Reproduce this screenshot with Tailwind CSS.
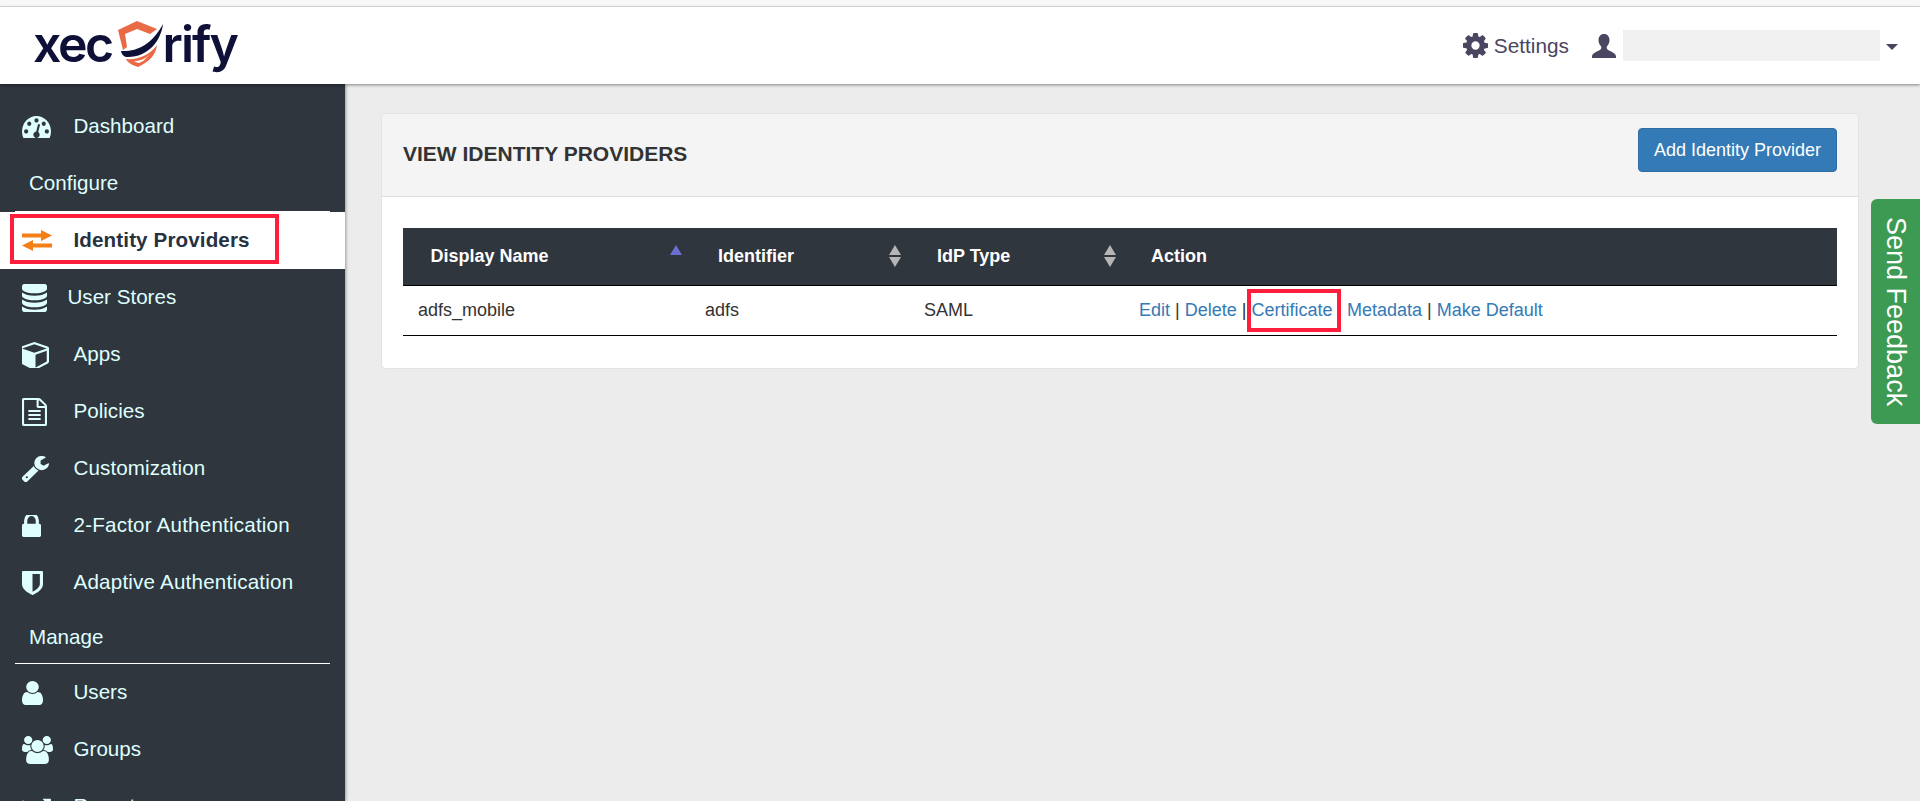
<!DOCTYPE html>
<html lang="en">
<head>
    <meta charset="UTF-8">
    <meta name="viewport" content="width=device-width, initial-scale=1.0">
    <title>View Identity Providers</title>
    <script src="https://cdn.jsdelivr.net/npm/@tailwindcss/browser@4"></script>
</head>
<body class="relative h-[801px] overflow-hidden bg-[#ececec] font-['Liberation_Sans',Arial,sans-serif] text-[18px] text-[#333]">
    <!-- browser strip -->
    <div class="h-[7px] bg-[#f8f8f8] border-b border-[#e0e0e0]"></div>

    <header class="relative z-20 h-[77px] bg-white shadow-[0_1px_3px_rgba(0,0,0,0.45)] flex items-center justify-between">
        <div class="flex items-center pl-[33px] text-[#0e1038] font-['Inter',sans-serif] font-semibold text-[50px] leading-none tracking-[-2.500px] -mt-[4px]">
            <span>xec</span>
            <svg class="w-[48px] h-[50px] ml-[6px] -mr-[3px]" viewBox="0 0 48 50">
                <path fill="#e96a45" d="M0 11 19 2 39 10 32 15 19 10 7 15 9 28 5 31Z"/>
                <path fill="#e96a45" d="M8 40C20 41 32 36 39 26 38 36 31 43 20 48 14 46 10 44 8 40Z"/>
                <path fill="#fff" d="M16 42C22 42 27 40 31 36 27 41 23 44 20 44Z"/>
                <path fill="#0e1038" d="M3 32C18 33 34 26 45 5 43 22 30 38 10 38 6 38 4 36 3 32Z"/>
            </svg>
            <span class="tracking-[-2px]">rify</span>
        </div>
        <div class="flex items-center text-[#4a4560] text-[20.8px] pr-[22px]">
            <svg class="w-[25px] h-[25px] mr-[6px]" viewBox="128 128 1536 1536" fill="#4a4560"><path d="M1152 896q0-106-75-181t-181-75-181 75-75 181 75 181 181 75 181-75 75-181zm512-109v222q0 12-8 23t-20 13l-185 28q-19 54-39 91 35 50 107 138 10 12 10 25t-9 23q-27 37-99 108t-94 71q-12 0-26-9l-138-108q-44 23-91 38-16 136-29 186-7 28-36 28h-222q-14 0-24.5-8.5t-11.5-21.5l-28-184q-49-16-90-37l-141 107q-10 9-25 9-14 0-25-11-126-114-165-168-7-10-7-23 0-12 8-23 15-21 51-66.5t54-70.5q-27-50-41-99l-183-27q-13-2-21-12.5t-8-23.5v-222q0-12 8-23t19-13l186-28q14-46 39-92-40-57-107-138-10-12-10-24 0-10 9-23 26-36 98.5-107.5t94.5-71.5q13 0 26 10l138 107q44-23 91-38 16-136 29-186 7-28 36-28h222q14 0 24.5 8.5t11.5 21.5l28 184q49 16 90 37l142-107q9-9 24-9 13 0 25 10 129 119 165 170 7 8 7 22 0 12-8 23-15 21-51 66.5t-54 70.5q26 50 41 98l183 28q13 2 21 12.5t8 23.5z"/></svg>
            <span>Settings</span>
            <svg class="w-[24px] h-[24px] ml-[23px]" viewBox="0 0 24 24" fill="#4a4560"><path d="M12 0c-3.6 0-5.5 2.7-5.5 6 0 2.6 1.2 5 2.7 6.6.3 1.4-.2 2.6-1 3.2C5.500 17.500 0 19 0 22.500V24h24v-1.500c0-3.500-5.500-5-8.200-6.700-.8-.6-1.300-1.800-1-3.200 1.500-1.600 2.700-4 2.700-6.600 0-3.300-1.900-6-5.500-6z"/></svg>
            <div class="w-[257px] h-[31px] ml-[7px] bg-[#f0f0f1]"></div>
            <div class="ml-[6px] mt-[3px] border-x-[6px] border-x-transparent border-t-[6px] border-t-[#4a4560]"></div>
        </div>
    </header>

    <div class="flex h-[717px]">
        <aside class="relative z-10 w-[345px] shrink-0 h-full overflow-hidden bg-[#30363e] text-[#dfffff] text-[20.6px] pt-[14px] shadow-[1px_0_3px_rgba(0,0,0,0.35)]">
            <a class="flex items-center h-[57px] pl-[22px]">
                <span class="w-[51.500px]"><svg class="w-[29px] h-[22px]" viewBox="0 256 1792 1280" preserveAspectRatio="none" fill="#dfffff"><path d="M384 1152q0-53-37.500-90.500t-90.500-37.500-90.500 37.500-37.500 90.500 37.500 90.500 90.500 37.500 90.500-37.500 37.500-90.500zm192-448q0-53-37.500-90.500t-90.500-37.500-90.500 37.500-37.500 90.500 37.500 90.500 90.500 37.500 90.500-37.500 37.500-90.500zm428 481l101-382q6-26-7.500-48.500t-38.500-29.500-48 6.500-30 39.500l-101 382q-60 5-107 43.500t-63 98.500q-20 77 20 146t117 89 146-20 89-117q16-60-6-117t-72-91zm660-33q0-53-37.500-90.500t-90.500-37.500-90.500 37.500-37.500 90.500 37.500 90.500 90.500 37.500 90.500-37.500 37.500-90.500zm-640-640q0-53-37.500-90.500t-90.500-37.500-90.500 37.500-37.500 90.500 37.500 90.500 90.500 37.500 90.500-37.500 37.500-90.500zm448 192q0-53-37.500-90.500t-90.500-37.500-90.500 37.500-37.500 90.500 37.500 90.500 90.500 37.500 90.500-37.500 37.500-90.500zm320 448q0 261-141 483-19 29-54 29h-1402q-35 0-54-29-141-221-141-483 0-182 71-348t191-286 286-191 348-71 348 71 286 191 191 286 71 348z"/></svg></span>
                <span>Dashboard</span>
            </a>
            <div class="mx-[15px] h-[57px] pl-[14px] flex items-center border-b border-white">Configure</div>
            <a class="flex items-center h-[57px] pl-[22px] bg-white text-[#26323f] font-bold">
                <span class="w-[51.500px]"><svg class="w-[30px] h-[21px]" viewBox="0 0 30 21" fill="#f47f17"><path d="M0 3.500H19V0L30 5.500 19 11V7.500H0Z"/><path d="M30 13.500H11V10L0 15.500 11 21V17.500H30Z"/></svg></span>
                <span class="tracking-[0.12px]">Identity Providers</span>
            </a>
            <a class="flex items-center h-[57px] pl-[22px]">
                <span class="w-[45.500px]"><svg class="w-[25px] h-[28px]" viewBox="128 128 1536 1536" preserveAspectRatio="none" fill="#dfffff"><path d="M896 768q237 0 443-43t325-127v170q0 69-103 128t-280 93.500-385 34.500-385-34.500-280-93.500-103-128v-170q119 84 325 127t443 43zm0 768q237 0 443-43t325-127v170q0 69-103 128t-280 93.500-385 34.500-385-34.500-280-93.500-103-128v-170q119 84 325 127t443 43zm0-384q237 0 443-43t325-127v170q0 69-103 128t-280 93.500-385 34.500-385-34.500-280-93.500-103-128v-170q119 84 325 127t443 43zm0-1152q208 0 385 34.500t280 93.500 103 128v128q0 69-103 128t-280 93.500-385 34.500-385-34.500-280-93.500-103-128v-128q0-69 103-128t280-93.500 385-34.500z"/></svg></span>
                <span>User Stores</span>
            </a>
            <a class="flex items-center h-[57px] pl-[22px]">
                <span class="w-[51.500px]"><svg class="w-[27px] h-[26px]" viewBox="128 128 1536 1536" preserveAspectRatio="none" fill="#dfffff"><path d="M896 1629l640-349v-636l-640 233v752zm-64-865l698-254-698-254-698 254zm832-252v768q0 35-18 65t-49 47l-704 384q-28 16-61 16t-61-16l-704-384q-31-17-49-47t-18-65v-768q0-40 23-73t61-47l704-256q22-8 44-8t44 8l704 256q38 14 61 47t23 73z"/></svg></span>
                <span>Apps</span>
            </a>
            <a class="flex items-center h-[57px] pl-[22px]">
                <span class="w-[51.500px]"><svg class="w-[25px] h-[28px]" viewBox="128 0 1536 1792" preserveAspectRatio="none" fill="#dfffff"><path d="M1596 380q28 28 48 76t20 88v1152q0 40-28 68t-68 28h-1344q-40 0-68-28t-28-68v-1600q0-40 28-68t68-28h896q40 0 88 20t76 48zm-444-244v376h376q-10-29-22-41l-313-313q-12-12-41-22zm384 1528v-1024h-416q-40 0-68-28t-28-68v-416h-768v1536h1280zm-1024-864q0-14 9-23t23-9h704q14 0 23 9t9 23v64q0 14-9 23t-23 9h-704q-14 0-23-9t-9-23v-64zm736 224q14 0 23 9t9 23v64q0 14-9 23t-23 9h-704q-14 0-23-9t-9-23v-64q0-14 9-23t23-9h704zm0 256q14 0 23 9t9 23v64q0 14-9 23t-23 9h-704q-14 0-23-9t-9-23v-64q0-14 9-23t23-9h704z"/></svg></span>
                <span>Policies</span>
            </a>
            <a class="flex items-center h-[57px] pl-[22px]">
                <span class="w-[51.500px]"><svg class="w-[27px] h-[26px]" viewBox="90 130 1636 1640" preserveAspectRatio="none" fill="#dfffff"><path d="M448 1472q0-26-19-45t-45-19-45 19-19 45 19 45 45 19 45-19 19-45zm644-420l-682 682q-37 37-90 37-52 0-91-37l-106-108q-38-36-38-90 0-53 38-91l681-681q39 98 114.500 173.500t173.500 114.500zm634-435q0 39-23 106-47 134-164.500 217.500t-258.500 83.500q-185 0-316.500-131.500t-131.500-316.500 131.500-316.500 316.500-131.500q58 0 121.500 16.500t107.500 46.500q16 11 16 28t-16 28l-293 169v224l193 107q5-3 79-48.500t135.500-81 70.500-35.500q15 0 23.500 10t8.500 25z"/></svg></span>
                <span class="tracking-[0.1px]">Customization</span>
            </a>
            <a class="flex items-center h-[57px] pl-[22px]">
                <span class="w-[51.500px]"><svg class="w-[19px] h-[22px]" viewBox="320 256 1152 1280" preserveAspectRatio="none" fill="#dfffff"><path d="M640 768h512v-192q0-106-75-181t-181-75-181 75-75 181v192zm832 96v576q0 40-28 68t-68 28h-960q-40 0-68-28t-28-68v-576q0-40 28-68t68-28h32v-192q0-184 132-316t316-132 316 132 132 316v192h32q40 0 68 28t28 68z"/></svg></span>
                <span class="tracking-[0.2px]">2-Factor Authentication</span>
            </a>
            <a class="flex items-center h-[57px] pl-[22px]">
                <span class="w-[51.500px]"><svg class="w-[21px] h-[24px]" viewBox="256 128 1280 1536" preserveAspectRatio="none" fill="#dfffff"><path d="M1344 960v-640h-448v1137q119-63 213-137 235-184 235-360zm192-768v768q0 86-33.500 170.500t-83 150-118 127.500-126.500 103-121 77.500-89.500 49.500-42.500 20q-12 6-26 6t-26-6q-16-7-42.500-20t-89.500-49.500-121-77.500-126.500-103-118-127.500-83-150-33.500-170.500v-768q0-26 19-45t45-19h1152q26 0 45 19t19 45z"/></svg></span>
                <span class="tracking-[0.2px]">Adaptive Authentication</span>
            </a>
            <div class="mx-[15px] h-[53px] pl-[14px] flex items-center border-b border-white">Manage</div>
            <a class="flex items-center h-[57px] pl-[22px]">
                <span class="w-[51.500px]"><svg class="w-[21px] h-[24px]" viewBox="256 128 1280 1536" preserveAspectRatio="none" fill="#dfffff"><path d="M1536 1399q0 109-62.500 187t-150.500 78h-854q-88 0-150.500-78t-62.500-187q0-85 8.500-160.500t31.500-152 58.500-131 94-89 134.500-34.500q131 128 313 128t313-128q76 0 134.500 34.500t94 89 58.500 131 31.500 152 8.500 160.500zm-256-887q0 159-112.500 271.500t-271.500 112.500-271.500-112.500-112.500-271.500 112.500-271.500 271.500-112.500 271.500 112.500 112.500 271.500z"/></svg></span>
                <span>Users</span>
            </a>
            <a class="flex items-center h-[57px] pl-[22px]">
                <span class="w-[51.500px]"><svg class="w-[31px] h-[28px]" viewBox="0 0 1920 1792" preserveAspectRatio="none" fill="#dfffff"><path d="M593 896q-162 5-265 128h-134q-82 0-138-40.500t-56-118.500q0-353 124-353 6 0 43.500 21t97.500 42.500 119 21.500q67 0 133-23-5 37-5 66 0 139 81 256zm1071 637q0 120-73 189.500t-194 69.500h-874q-121 0-194-69.500t-73-189.500q0-53 3.500-103.500t14-109 26.500-108.500 43-97.500 62-81 85.500-53.500 111.500-20q10 0 43 21.500t73 48 107 48 135 21.500 135-21.500 107-48 73-48 43-21.500q61 0 111.500 20t85.500 53.500 62 81 43 97.500 26.500 108.500 14 109 3.500 103.500zm-1024-1277q0 106-75 181t-181 75-181-75-75-181 75-181 181-75 181 75 75 181zm704 384q0 159-112.500 271.500t-271.500 112.500-271.500-112.500-112.500-271.500 112.500-271.500 271.500-112.500 271.500 112.500 112.500 271.500zm576 225q0 78-56 118.500t-138 40.500h-134q-103-123-265-128 81-117 81-256 0-29-5-66 66 23 133 23 59 0 119-21.500t97.500-42.500 43.500-21q124 0 124 353zm-128-609q0 106-75 181t-181 75-181-75-75-181 75-181 181-75 181 75 75 181z"/></svg></span>
                <span>Groups</span>
            </a>
            <a class="flex items-center h-[57px] pl-[22px]">
                <span class="w-[51.500px]"><svg class="w-[31px] h-[20px]" viewBox="0 256 1920 1408" preserveAspectRatio="none" fill="#dfffff"><path d="M1920 1536v128h-1920v-1152h128v1024h1792zm-128-1120v435q0 21-19.500 29.500t-35.500-7.500l-121-121-633 633q-10 10-23 10t-23-10l-233-233-416 416-192-192 585-585q10-10 23-10t23 10l233 233 464-464-121-121q-16-16-7.500-35.500t29.500-19.500h435q14 0 23 9t9 23z"/></svg></span>
                <span>Reports</span>
            </a>
        </aside>

        <main class="flex-1 pl-[36px] pr-[61px] pt-[29px]">
            <section class="bg-white border border-[#e3e3e3] rounded-[5px] overflow-hidden">
                <div class="h-[83px] bg-[#f4f4f4] border-b border-[#ddd] pl-[21px] pr-[21px] flex justify-between">
                    <h2 class="text-[21px] font-bold text-[#333] mt-[27px] leading-[26px]">VIEW IDENTITY PROVIDERS</h2>
                    <button class="w-[199px] h-[44px] mt-[14px] bg-[#337ab7] border border-[#2e6da4] rounded-[4px] text-white text-[18px]">Add Identity Provider</button>
                </div>
                <div class="pl-[21px] pr-[21px] pt-[31px] pb-[32px]">
                    <table class="w-full table-fixed border-collapse">
                        <colgroup>
                            <col class="w-[287px]"><col class="w-[219px]"><col class="w-[215px]"><col>
                        </colgroup>
                        <thead>
                            <tr class="h-[57px] bg-[#30363e] text-white text-left border-b border-black">
                                <th class="relative pl-[27.500px] font-bold">Display Name
                                    <span class="absolute right-[8px] top-[17px] border-x-[6.500px] border-x-transparent border-b-[10px] border-b-[#6a6fd0]"></span>
                                </th>
                                <th class="relative pl-[28px] font-bold">Identifier
                                    <span class="absolute right-[8px] top-[17px] border-x-[6.500px] border-x-transparent border-b-[10px] border-b-[#b5b5b5]"></span>
                                    <span class="absolute right-[8px] top-[29px] border-x-[6.500px] border-x-transparent border-t-[10px] border-t-[#b5b5b5]"></span>
                                </th>
                                <th class="relative pl-[28px] font-bold">IdP Type
                                    <span class="absolute right-[8px] top-[17px] border-x-[6.500px] border-x-transparent border-b-[10px] border-b-[#b5b5b5]"></span>
                                    <span class="absolute right-[8px] top-[29px] border-x-[6.500px] border-x-transparent border-t-[10px] border-t-[#b5b5b5]"></span>
                                </th>
                                <th class="pl-[27px] font-bold">Action</th>
                            </tr>
                        </thead>
                        <tbody>
                            <tr class="h-[50px] border-b border-black">
                                <td class="pl-[15px]">adfs_mobile</td>
                                <td class="pl-[15px]">adfs</td>
                                <td class="pl-[15px]">SAML</td>
                                <td class="pl-[15px]"><a class="text-[#337ab7]">Edit</a> | <a class="text-[#337ab7]">Delete</a> | <a class="text-[#337ab7]">Certificate</a> <a class="ml-[9.500px] text-[#337ab7]">Metadata</a> | <a class="text-[#337ab7]">Make Default</a></td>
                            </tr>
                        </tbody>
                    </table>
                </div>
            </section>
        </main>
    </div>

    <!-- feedback tab -->
    <button class="absolute z-10 left-[1871px] top-[199px] w-[49px] h-[225px] bg-[#3d9a52] rounded-l-[6px] text-white text-[27px] flex items-center justify-center [writing-mode:vertical-rl]">Send Feedback</button>

    <!-- red annotation boxes -->
    <div class="absolute z-30 left-[10px] top-[214px] w-[269px] h-[50px] border-4 border-[#ff1f3d]"></div>
    <div class="absolute z-30 left-[1247px] top-[289px] w-[94px] h-[43px] border-4 border-[#ff1f3d]"></div>
</body>
</html>
